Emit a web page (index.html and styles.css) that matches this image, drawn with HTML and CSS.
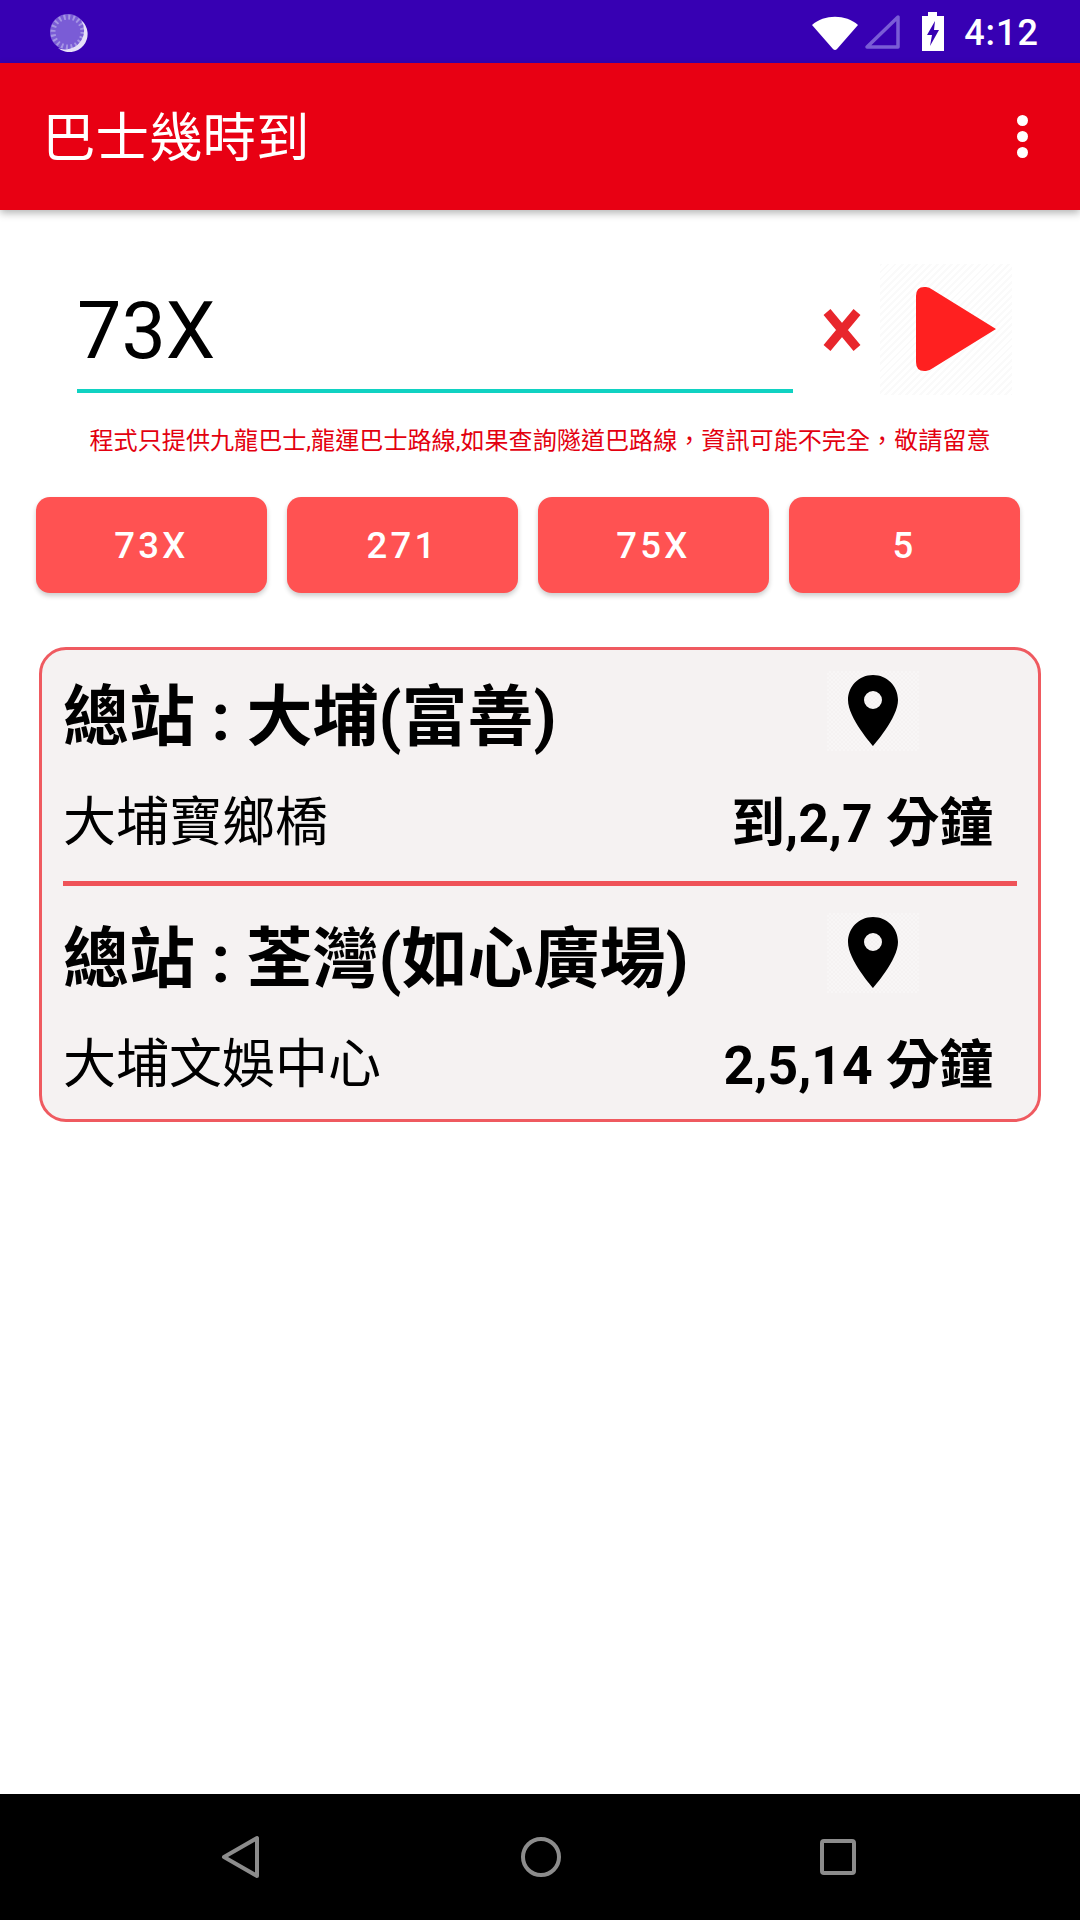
FILE: index.html
```html
<!DOCTYPE html>
<html lang="zh-Hant">
<head>
  <meta charset="UTF-8" />
  <meta name="viewport" content="width=device-width, initial-scale=1.0" />
  <title>巴士幾時到</title>
  <link rel="stylesheet" href="styles.css">
</head>
<body>
  <div class="phone">
    <div class="status-bar">
      <svg class="loader" width="40" height="40" viewBox="0 0 40 40">
        <circle cx="20" cy="20" r="18" fill="#7a5cd6"/>
        <circle cx="20" cy="20" r="15" fill="none" stroke="#a595e4" stroke-width="5" stroke-dasharray="2 2.7"/>
        <path d="M33 8 A18 18 0 0 1 10 36 A19 19 0 0 0 33 8 Z" fill="#e6e0f8"/>
      </svg>
      <div class="status-right">
        <svg width="48" height="36" viewBox="0 0 48 36"><path d="M1 11 C13 0 35 0 47 11 L26 35 Q24 37 22 35 Z" fill="#fff"/></svg>
        <svg width="38" height="38" viewBox="0 0 38 38"><path d="M34 4 V34 H3 Z" fill="none" stroke="#7a5cd6" stroke-width="3.5" stroke-linejoin="round"/></svg>
        <svg class="battery" width="24" height="40" viewBox="0 0 24 40"><path d="M7 0 H16 V4 H23 V39 H1 V4 H7 Z" fill="#fff"/><path d="M14 9 L6 23 H11 L9 34 L18 18 H13 Z" fill="#3700b3"/></svg>
        <span class="clock">4:12</span>
      </div>
    </div>

    <header class="app-bar">
      <div class="logo">巴士幾時到</div>
      <div class="menu-dots"><i></i><i></i><i></i></div>
    </header>

    <main>
      <div class="search-row">
        <div class="route-input">73X</div>
        <svg class="clear-btn" width="42" height="48" viewBox="0 0 42 48"><path d="M6 6 L36 42 M36 6 L6 42" stroke="#e8262c" stroke-width="9"/></svg>
        <div class="go-btn">
          <svg width="82" height="86" viewBox="0 0 82 86"><path d="M1 10 Q1 0 11 1 Q14 1 18 4 L81 43 L18 82 Q14 85 11 85 Q1 86 1 76 Z" fill="#ff2020"/></svg>
        </div>
      </div>

      <p class="notice">程式只提供九龍巴士,龍運巴士路線,如果查詢隧道巴路線，資訊可能不完全，敬請留意</p>

      <div class="recent-routes">
        <button class="route-btn">73X</button>
        <button class="route-btn">271</button>
        <button class="route-btn">75X</button>
        <button class="route-btn">5</button>
      </div>

      <div class="eta-card">
        <div class="eta-group first">
          <div class="eta-head">
            <div class="terminus">總站 : 大埔(富善)</div>
            <div class="pin-box">
              <svg width="50" height="72" viewBox="0 0 50 72"><path fill-rule="evenodd" d="M25 0 C11 0 0 11 0 25 C0 43 25 71 25 71 C25 71 50 43 50 25 C50 11 39 0 25 0 Z M25 16 A9 9 0 1 1 25 34 A9 9 0 1 1 25 16 Z" fill="#000"/></svg>
            </div>
          </div>
          <div class="eta-row">
            <span class="stop">大埔寶鄉橋</span>
            <span class="mins">到,2,7 分鐘</span>
          </div>
        </div>
        <div class="eta-group">
          <div class="eta-head">
            <div class="terminus">總站 : 荃灣(如心廣場)</div>
            <div class="pin-box">
              <svg width="50" height="72" viewBox="0 0 50 72"><path fill-rule="evenodd" d="M25 0 C11 0 0 11 0 25 C0 43 25 71 25 71 C25 71 50 43 50 25 C50 11 39 0 25 0 Z M25 16 A9 9 0 1 1 25 34 A9 9 0 1 1 25 16 Z" fill="#000"/></svg>
            </div>
          </div>
          <div class="eta-row">
            <span class="stop">大埔文娛中心</span>
            <span class="mins">2,5,14 分鐘</span>
          </div>
        </div>
      </div>
    </main>

    <nav class="nav-bar">
      <svg width="40" height="44" viewBox="0 0 40 44"><path d="M36 3 V41 L3 22 Z" fill="none" stroke="#8c8c8c" stroke-width="4" stroke-linejoin="round"/></svg>
      <svg width="42" height="42" viewBox="0 0 42 42"><circle cx="21" cy="21" r="18" fill="none" stroke="#8c8c8c" stroke-width="4"/></svg>
      <svg width="36" height="36" viewBox="0 0 36 36"><rect x="2" y="2" width="32" height="32" rx="2" fill="none" stroke="#8c8c8c" stroke-width="4"/></svg>
    </nav>
  </div>
</body>
</html>
```

FILE: styles.css
```css
body {
  font-family: Roboto, "Noto Sans CJK TC", sans-serif;
  margin: 0;
  padding: 0;
  background: #fff;
  color: #000;
}
.phone {
  width: 1080px;
  height: 1920px;
  display: flex;
  flex-direction: column;
  overflow: hidden;
}
.status-bar {
  height: 63px;
  background: #3700b3;
  display: flex;
  justify-content: space-between;
  align-items: center;
  padding: 0 41px 0 48px;
  flex: none;
}
.status-right {
  display: flex;
  align-items: center;
  color: #fff;
}
.battery {
  margin: 0 19px 0 19px;
}
.status-right svg:first-child {
  margin-right: 5px;
}
.clock {
  font-size: 36px;
  font-weight: 500;
  letter-spacing: 1px;
  padding-top: 2px;
}
.app-bar {
  height: 147px;
  background: #e80013;
  color: #fff;
  display: flex;
  justify-content: space-between;
  align-items: center;
  padding: 0 52px 0 42px;
  box-shadow: 0 3px 8px rgba(0,0,0,0.3);
  flex: none;
  position: relative;
}
.logo {
  font-size: 53.5px;
  margin-bottom: 6px;
}
.menu-dots {
  display: flex;
  flex-direction: column;
  gap: 5px;
}
.menu-dots i {
  display: block;
  width: 11px;
  height: 11px;
  border-radius: 50%;
  background: #fff;
}
main {
  flex: 1;
  padding: 55px 0 0;
}
.search-row {
  display: flex;
  align-items: center;
  padding-left: 77px;
  height: 130px;
}
.route-input {
  width: 716px;
  height: 125px;
  box-sizing: border-box;
  border-bottom: 4px solid #10d2c2;
  font-size: 79px;
  line-height: 126px;
}
.clear-btn {
  margin-left: 28px;
}
.go-btn {
  width: 132px;
  height: 131px;
  margin: -2px 0 0 17px;
  display: flex;
  align-items: center;
  justify-content: center;
  background: repeating-linear-gradient(135deg, #fafafa 0 2px, #fff 2px 5px);
}
.go-btn svg {
  margin-left: 19px;
}
.notice {
  margin: 28px 0 0;
  text-align: center;
  color: #e3000f;
  font-size: 24.1px;
  line-height: 36px;
}
.recent-routes {
  display: flex;
  gap: 20px;
  padding-left: 36px;
  margin-top: 38px;
}
.route-btn {
  width: 231px;
  height: 96px;
  background: #ff5252;
  color: #fff;
  border: none;
  border-radius: 14px;
  font-family: inherit;
  font-size: 36.5px;
  font-weight: 500;
  letter-spacing: 3.3px;
  box-shadow: 0 3px 5px rgba(0,0,0,0.2);
}
.eta-card {
  width: 1002px;
  height: 475px;
  box-sizing: border-box;
  margin: 54px 0 0 39px;
  padding: 0 21px;
  border: 3px solid #ef5a60;
  border-radius: 27px;
  background: #f5f2f2;
}
.eta-group.first {
  border-bottom: 5px solid #ef5358;
  height: 231px;
}
.eta-group + .eta-group {
  padding-top: 6px;
}
.eta-head {
  display: flex;
  justify-content: space-between;
  align-items: center;
  height: 122px;
}
.terminus {
  font-size: 66px;
  font-weight: 700;
}
.pin-box {
  width: 92px;
  height: 80px;
  margin-right: 98px;
  display: flex;
  align-items: center;
  justify-content: center;
  background: repeating-conic-gradient(#f8f6f6 0 25%, #f5f2f2 0 50%) 0 0 / 4px 4px;
}
.eta-row {
  display: flex;
  justify-content: space-between;
  align-items: center;
  height: 92px;
  padding-right: 24px;
  font-size: 53px;
}
.mins {
  font-weight: 700;
  font-size: 53.5px;
}
.nav-bar {
  height: 126px;
  background: #000;
  flex: none;
  display: flex;
  align-items: center;
  justify-content: space-between;
  padding: 0 224px 0 221px;
}
```
